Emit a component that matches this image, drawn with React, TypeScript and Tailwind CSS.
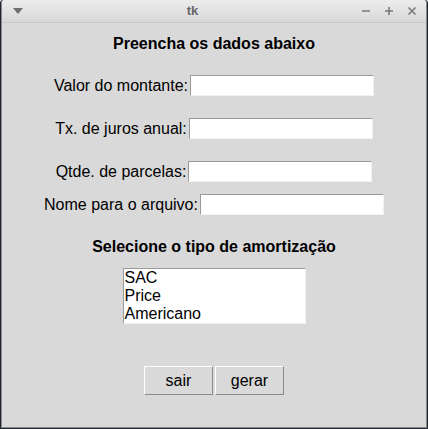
import React from "react"

const fields = [
  { label: "Valor do montante:", mt: "mt-[22px]" },
  { label: "Tx. de juros anual:", mt: "mt-[22px]" },
  { label: "Qtde. de parcelas:", mt: "mt-[22px]" },
  { label: "Nome para o arquivo:", mt: "mt-[12px]" },
]

export default function App() {
  return (
    <div
      className="w-[428px] h-[429px] flex flex-col bg-[#1c2530] p-[1px] pt-0 rounded-t-[3px] overflow-hidden"
      style={{ fontFamily: '"Liberation Sans", Arial, sans-serif' }}
    >
      <div className="flex-1 flex flex-col border border-t-0 border-[#8a8a8a] bg-[#d9d9d9] rounded-t-[3px]">
        {/* title bar */}
        <div className="h-[23px] flex items-center justify-between pl-[10px] pr-[9px] bg-gradient-to-b from-[#ececec] to-[#d8d8d8] border-b border-[#c8c8c8] rounded-t-[3px]">
          <svg width="12" height="8" viewBox="0 0 12 8">
            <path d="M1 1 L11 1 L6 7 Z" fill="#6d6d6d" />
          </svg>
          <span className="text-[13px] font-bold text-[#666]">tk</span>
          <div className="flex items-center gap-[13px]">
            <svg width="10" height="10" viewBox="0 0 10 10">
              <path d="M1 5 H9" stroke="#7a7a7a" strokeWidth="1.6" />
            </svg>
            <svg width="10" height="10" viewBox="0 0 10 10">
              <path d="M1 5 H9 M5 1 V9" stroke="#7a7a7a" strokeWidth="1.6" />
            </svg>
            <svg width="10" height="10" viewBox="0 0 10 10">
              <path d="M1.5 1.5 L8.5 8.5 M8.5 1.5 L1.5 8.5" stroke="#7a7a7a" strokeWidth="1.6" />
            </svg>
          </div>
        </div>

        {/* content */}
        <div className="flex flex-col items-center text-[16px] text-black">
          <div className="mt-[12px] h-[18px] leading-[18px] font-bold">Preencha os dados abaixo</div>

          {fields.map((f) => (
            <div key={f.label} className={`${f.mt} flex items-center h-[21px]`}>
              <span className="leading-[18px] pr-[2px]">{f.label}</span>
              <input
                type="text"
                className="w-[184px] h-[21px] bg-white border border-t-[#9a9a9a] border-l-[#9a9a9a] border-r-[#f2f2f2] border-b-[#f2f2f2] outline-none"
              />
            </div>
          ))}

          <div className="mt-[23px] h-[18px] leading-[18px] font-bold">Selecione o tipo de amortização</div>

          <div className="mt-[12px] w-[183px] h-[56px] bg-white border border-t-[#9a9a9a] border-l-[#9a9a9a] border-r-[#f2f2f2] border-b-[#f2f2f2] flex flex-col leading-[18px]">
            <span className="pl-[1px]">SAC</span>
            <span className="pl-[1px]">Price</span>
            <span className="pl-[1px]">Americano</span>
          </div>

          <div className="mt-[42px] flex gap-[2px]">
            <button className="w-[69px] h-[29px] bg-[#d9d9d9] border border-t-white border-l-white border-r-[#8a8a8a] border-b-[#8a8a8a]">
              sair
            </button>
            <button className="w-[69px] h-[29px] bg-[#d9d9d9] border border-t-white border-l-white border-r-[#8a8a8a] border-b-[#8a8a8a]">
              gerar
            </button>
          </div>
        </div>
      </div>
    </div>
  )
}
